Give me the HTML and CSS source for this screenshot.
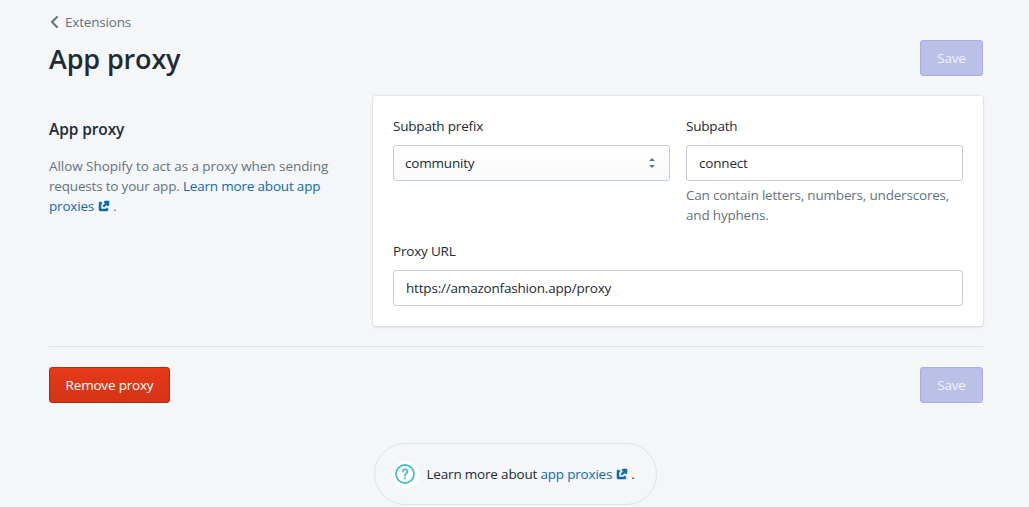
FILE: index.html
```html
<!DOCTYPE html>
<html lang="en">
<head>
<meta charset="utf-8">
<title>App proxy</title>
<link rel="stylesheet" href="styles.css">
</head>
<body>
<svg class="defs" aria-hidden="true">
  <symbol id="external" viewBox="0 0 20 20"><path d="M13 12a1 1 0 0 1 1 1v1a1 1 0 0 1-1 1H6c-.575 0-1-.484-1-1V7a1 1 0 0 1 1-1h1a1 1 0 0 1 0 2v5h5a1 1 0 0 1 1-1zm-2-7h4v4a1 1 0 1 1-2 0v-.586l-2.293 2.293a.999.999 0 1 1-1.414-1.414L11.586 7H11a1 1 0 0 1 0-2z"/></symbol>
</svg>
<main class="page">
  <a class="breadcrumb"><svg class="chevron" viewBox="0 0 20 20"><path d="M12 16a.997.997 0 0 1-.707-.293l-5-5a.999.999 0 0 1 0-1.414l5-5a.999.999 0 1 1 1.414 1.414L8.414 10l4.293 4.293A.999.999 0 0 1 12 16"/></svg><span>Extensions</span></a>
  <header class="header">
    <h1 class="title">App proxy</h1>
    <button class="button save" disabled>Save</button>
  </header>
  <section class="layout">
    <div class="annotation">
      <h2 class="heading">App proxy</h2>
      <p class="description"><span class="lead">Allow Shopify to act as a proxy when sending</span><br>requests to your app. <a class="link">Learn more about app</a><br><a class="link">proxies<svg class="external"><use href="#external"/></svg></a>.</p>
    </div>
    <div class="card">
      <div class="field">
        <label class="label">Subpath prefix</label>
        <div class="control select"><span>community</span><svg class="arrows" viewBox="0 0 20 20"><path d="M13 8l-3-3-3 3h6zm-.1 4L10 14.9 7.1 12h5.8z"/></svg></div>
      </div>
      <div class="field">
        <label class="label">Subpath</label>
        <div class="control">connect</div>
        <p class="help">Can contain letters, numbers, underscores,<br>and hyphens.</p>
      </div>
      <div class="field wide">
        <label class="label">Proxy URL</label>
        <div class="control">https://amazonfashion.app/proxy</div>
      </div>
    </div>
  </section>
  <div class="actions">
    <button class="button remove">Remove proxy</button>
    <button class="button save" disabled>Save</button>
  </div>
  <footer class="footer">
    <div class="footer-help">
      <span class="badge"><svg class="question" viewBox="0 0 20 20"><circle cx="10" cy="10" r="9"/><path d="M7.8 7.5a2.3 2.3 0 1 1 3.6 1.9c-.8.6-1.4.9-1.4 2.1"/><circle class="dot" cx="10" cy="14.3" r="1.1"/></svg></span>
      <span>Learn more about <a class="link">app proxies<svg class="external"><use href="#external"/></svg></a>.</span>
    </div>
  </footer>
</main>
</body>
</html>
```
FILE: styles.css
```css
* { box-sizing: border-box; }
body {
  margin: 0;
  height: 507px;
  overflow: hidden;
  background: #f4f6f8;
  color: #212b36;
  font: 13.5px/20px "Open Sans", "Noto Sans", sans-serif;
  letter-spacing: -0.19px;
}
h1, h2, p { margin: 0; }
.defs { display: none; }
.page { width: 934px; margin-left: 49px; padding-top: 12px; }
.breadcrumb { display: flex; align-items: center; height: 20px; color: #637381; }
.chevron { width: 20px; height: 20px; margin: 0 0 0 -4px; fill: #637381; }
.header { display: flex; justify-content: space-between; margin-top: 8px; height: 36px; }
.title { font-size: 27px; line-height: 38px; font-weight: 600; letter-spacing: -0.15px; }
.button {
  height: 36px;
  padding: 0 15px;
  border: 1px solid;
  border-radius: 3px;
  font: inherit;
  letter-spacing: inherit;
  white-space: nowrap;
  color: #fff;
}
.save { width: 63px; background: #bbc0e6; border-color: #a9afdd; color: #f1f2fb; }
.remove { width: 121px; background: linear-gradient(#e6391a, #d53515); border-color: #b02b13; box-shadow: inset 0 1px 0 #e33d1c; }
.layout { display: grid; grid-template-columns: 324px 610px; margin-top: 20px; }
.heading { margin-top: 23px; font-size: 15.5px; line-height: 20px; font-weight: 600; letter-spacing: -0.1px; }
.description { margin-top: 17px; color: #637381; white-space: nowrap; }
.lead { letter-spacing: -0.06px; }
.link { color: #0d6ab0; }
.external { width: 20px; height: 20px; margin-right: -1px; vertical-align: -5px; fill: #0d6ab0; stroke: #0d6ab0; stroke-width: .5; }
.card {
  display: grid;
  grid-template-columns: 277px 277px;
  column-gap: 16px;
  height: 230px;
  padding: 20px;
  border-radius: 3px;
  background: #fff;
  box-shadow: 0 0 0 1px rgba(63, 63, 68, .05), 0 1px 3px rgba(63, 63, 68, .15);
}
.field { height: 125px; white-space: nowrap; }
.wide { grid-column: span 2; height: 65px; }
.label { display: block; height: 20px; }
.control {
  display: flex;
  align-items: center;
  height: 36px;
  margin-top: 9px;
  padding: 0 12px;
  border: 1px solid #c4cdd5;
  border-radius: 3px;
  background: #fff;
}
.select { justify-content: space-between; padding: 0 7px 0 11px; background: linear-gradient(#fff, #f9fafb); }
.arrows { width: 20px; height: 20px; fill: #637381; }
.help { margin-top: 4px; color: #637381; }
.actions {
  display: flex;
  justify-content: space-between;
  margin-top: 20px;
  padding-top: 20px;
  border-top: 1px solid #dfe3e8;
}
.footer { display: flex; justify-content: center; margin: 40px 2px 0 0; }
.footer-help {
  display: flex;
  align-items: center;
  width: 283px;
  height: 62px;
  padding-left: 17px;
  border: 1px solid #dfe3e8;
  border-radius: 31px;
  white-space: nowrap;
}
.badge {
  display: grid;
  place-items: center;
  width: 27px;
  height: 27px;
  margin-right: 8px;
  border-radius: 50%;
  background: #fff;
}
.question { width: 20px; height: 20px; fill: none; stroke: #47c1bf; stroke-width: 1.8; stroke-linecap: round; }
.question .dot { fill: #47c1bf; stroke: none; }
```
